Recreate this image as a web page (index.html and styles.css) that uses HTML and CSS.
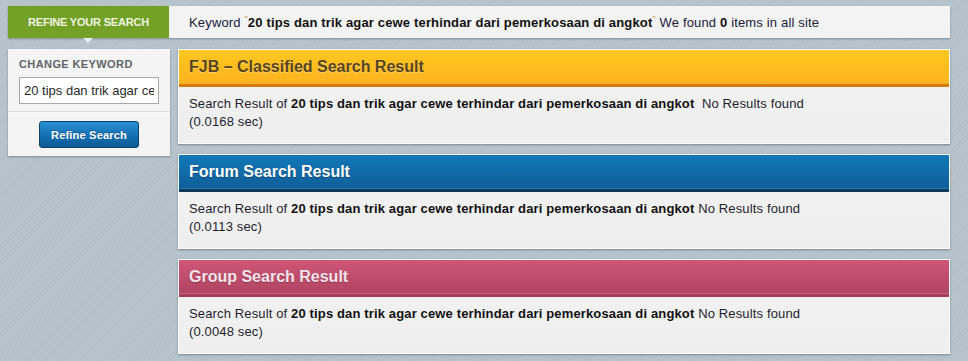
FILE: index.html
```html
<!DOCTYPE html>
<html>
<head>
<meta charset="utf-8">
<link rel="stylesheet" href="styles.css">
</head>
<body>
<div class="page">
  <div class="topbar">
    <div class="tab">REFINE YOUR SEARCH<span class="tab-arrow"></span></div>
    <div class="summary">Keyword <span class="q">&quot;</span><b>20 tips dan trik agar cewe terhindar dari pemerkosaan di angkot</b><span class="q">&quot;</span> We found <b>0</b> items in all site</div>
  </div>
  <div class="main">
    <aside class="sidebar">
      <div class="side-top">
        <div class="label">CHANGE KEYWORD</div>
        <input class="kw" type="text" value="20 tips dan trik agar cewe terhindar dari pemerkosaan di angkot">
      </div>
      <div class="side-bottom">
        <button class="btn">Refine Search</button>
      </div>
    </aside>
    <div class="results">
      <section class="panel">
        <h2 class="head yellow">FJB &ndash; Classified Search Result</h2>
        <div class="body">Search Result of <b>20 tips dan trik agar cewe terhindar dari pemerkosaan di angkot</b>&nbsp; No Results found<br>(0.0168 sec)</div>
      </section>
      <section class="panel">
        <h2 class="head blue">Forum Search Result</h2>
        <div class="body">Search Result of <b>20 tips dan trik agar cewe terhindar dari pemerkosaan di angkot</b> No Results found<br>(0.0113 sec)</div>
      </section>
      <section class="panel">
        <h2 class="head pink">Group Search Result</h2>
        <div class="body">Search Result of <b>20 tips dan trik agar cewe terhindar dari pemerkosaan di angkot</b> No Results found<br>(0.0048 sec)</div>
      </section>
    </div>
  </div>
</div>
</body>
</html>
```
FILE: styles.css
```css
html, body {
  margin: 0;
  padding: 0;
}
body {
  font-family: "Liberation Sans", Arial, sans-serif;
  font-size: 13px;
  color: #1e1e2e;
  background-color: #b7c3cb;
  background-image: repeating-linear-gradient(135deg, #b9c5cd 0px, #b9c5cd 2px, #b3bfc7 2px, #b3bfc7 3px);
  height: 361px;
  overflow: hidden;
}
.page {
  padding: 6px 18px 0 8px;
}
.topbar {
  display: flex;
  height: 32px;
  background: #f3f3f3;
  box-shadow: 0 1px 2px rgba(60, 75, 90, 0.45);
}
.tab {
  position: relative;
  width: 161px;
  flex: none;
  background: #73a026;
  color: #eef4e2;
  font-weight: bold;
  font-size: 11px;
  letter-spacing: -0.2px;
  display: flex;
  align-items: center;
  justify-content: center;
}
.tab-arrow {
  position: absolute;
  left: 75px;
  bottom: -5px;
  width: 0;
  height: 0;
  border-left: 5px solid transparent;
  border-right: 5px solid transparent;
  border-top: 5px solid #e9edf0;
}
.summary {
  padding-left: 20px;
  display: flex;
  align-items: center;
  white-space: pre;
  color: #20203a;
  letter-spacing: 0.16px;
}
.summary b { color: #111; }
.q {
  color: #c9a448;
  font-size: 9px;
  position: relative;
  top: -3px;
}
.main {
  display: flex;
  gap: 8px;
  margin-top: 11px;
}
.sidebar {
  width: 162px;
  flex: none;
  align-self: flex-start;
  background: #f4f4f4;
  box-shadow: 0 1px 2px rgba(60, 75, 90, 0.45);
}
.side-top {
  padding: 9px 11px 7px 11px;
  border-bottom: 1px solid #dcdcdc;
}
.label {
  font-size: 11px;
  font-weight: bold;
  color: #60646a;
  letter-spacing: 0.4px;
  margin-bottom: 7px;
}
.kw {
  display: block;
  box-sizing: border-box;
  width: 140px;
  height: 27px;
  border: 1px solid #a9a9a9;
  background: #fff;
  font-family: "Liberation Sans", Arial, sans-serif;
  font-size: 13px;
  color: #2a2a2a;
  padding: 0 4px;
  margin: 0;
  outline: none;
}
.side-bottom {
  padding: 8px 0 8px 0;
  display: flex;
  justify-content: center;
  border-top: 1px solid #f9f9f9;
}
.btn {
  width: 100px;
  height: 27px;
  border: 1px solid #0b4470;
  border-radius: 3px;
  background: linear-gradient(#2a8fd4, #1470b2 55%, #0d5a94);
  color: #fff;
  font-family: "Liberation Sans", Arial, sans-serif;
  font-size: 11px;
  letter-spacing: 0.2px;
  font-weight: bold;
  text-shadow: 0 -1px 0 rgba(0,0,0,0.3);
  padding: 0;
}
.results {
  flex: 1;
  display: flex;
  flex-direction: column;
  gap: 10px;
}
.panel {
  border: 1px solid #fbfbfb;
  background: linear-gradient(#f3f3f3, #eeeeee);
  box-shadow: 0 1px 2px rgba(60, 75, 90, 0.5);
  height: 93px;
  box-sizing: content-box;
}
.head {
  margin: 0;
  height: 34px;
  line-height: 34px;
  padding-left: 10px;
  font-size: 16px;
  font-weight: bold;
}
.yellow {
  background: linear-gradient(#ffc81f, #ffb31f);
  color: #574524;
  text-shadow: 0 1px 0 rgba(255,255,255,0.35);
  border-bottom: 3px solid #d27a0e;
}
.blue {
  background: linear-gradient(#1378b8, #0f5e98);
  color: #fff;
  text-shadow: 0 1px 1px rgba(0,0,0,0.3);
  border-bottom: 3px solid #0e3a5c;
  box-shadow: inset 0 -1px 0 #2a78ae;
}
.pink {
  background: linear-gradient(#cf5676, #b14462);
  color: #f5e4ea;
  text-shadow: 0 1px 1px rgba(0,0,0,0.25);
  border-bottom: 3px solid #a43c5a;
  box-shadow: inset 0 -1px 0 #c9647f;
}
.body {
  padding: 8px 10px 0 10px;
  line-height: 18px;
  color: #1e1e2e;
  letter-spacing: 0.14px;
}
.body b { color: #111; }
```
